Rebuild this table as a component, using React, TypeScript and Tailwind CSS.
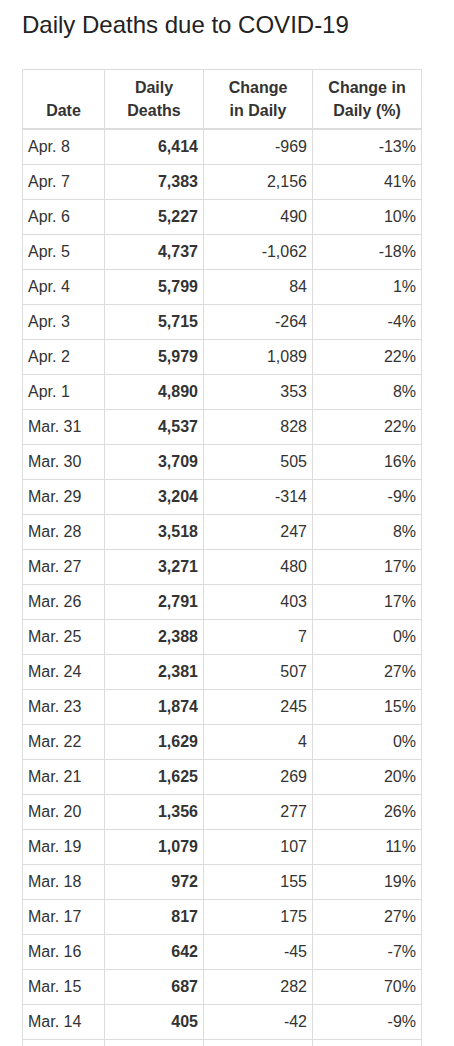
const rows: [string, string, string, string][] = [
  ['Apr. 8', '6,414', '-969', '-13%'],
  ['Apr. 7', '7,383', '2,156', '41%'],
  ['Apr. 6', '5,227', '490', '10%'],
  ['Apr. 5', '4,737', '-1,062', '-18%'],
  ['Apr. 4', '5,799', '84', '1%'],
  ['Apr. 3', '5,715', '-264', '-4%'],
  ['Apr. 2', '5,979', '1,089', '22%'],
  ['Apr. 1', '4,890', '353', '8%'],
  ['Mar. 31', '4,537', '828', '22%'],
  ['Mar. 30', '3,709', '505', '16%'],
  ['Mar. 29', '3,204', '-314', '-9%'],
  ['Mar. 28', '3,518', '247', '8%'],
  ['Mar. 27', '3,271', '480', '17%'],
  ['Mar. 26', '2,791', '403', '17%'],
  ['Mar. 25', '2,388', '7', '0%'],
  ['Mar. 24', '2,381', '507', '27%'],
  ['Mar. 23', '1,874', '245', '15%'],
  ['Mar. 22', '1,629', '4', '0%'],
  ['Mar. 21', '1,625', '269', '20%'],
  ['Mar. 20', '1,356', '277', '26%'],
  ['Mar. 19', '1,079', '107', '11%'],
  ['Mar. 18', '972', '155', '19%'],
  ['Mar. 17', '817', '175', '27%'],
  ['Mar. 16', '642', '-45', '-7%'],
  ['Mar. 15', '687', '282', '70%'],
  ['Mar. 14', '405', '-42', '-9%'],
  ['Mar. 13', '447', '107', '31%'],
];

const th = 'border border-[#ddd] px-[5px] py-[6px] align-bottom text-center font-bold leading-[23px]';
const td = 'border border-[#ddd] px-[5px] py-[6px] leading-[22px]';

export default function App() {
  return (
    <div className="min-h-screen bg-white px-[22px] pt-[12px] pb-10 text-[#333] font-['Liberation_Sans',Arial,sans-serif]">
      <h1 className="text-[24px] leading-[26px] text-[#222] font-normal">Daily Deaths due to COVID-19</h1>
      <table className="mt-[31px] w-[399px] table-fixed border-collapse text-[16px]">
        <colgroup>
          <col className="w-[82px]" />
          <col className="w-[99px]" />
          <col className="w-[109px]" />
          <col className="w-[109px]" />
        </colgroup>
        <thead>
          <tr className="border-b-2 border-b-[#ddd]">
            <th className={th}>Date</th>
            <th className={th}>Daily<br />Deaths</th>
            <th className={th}>Change<br />in Daily</th>
            <th className={th}>Change in<br />Daily (%)</th>
          </tr>
        </thead>
        <tbody>
          {rows.map(([date, deaths, change, pct]) => (
            <tr key={date}>
              <td className={td + ' text-left'}>{date}</td>
              <td className={td + ' text-right font-bold'}>{deaths}</td>
              <td className={td + ' text-right'}>{change}</td>
              <td className={td + ' text-right'}>{pct}</td>
            </tr>
          ))}
        </tbody>
      </table>
    </div>
  );
}
